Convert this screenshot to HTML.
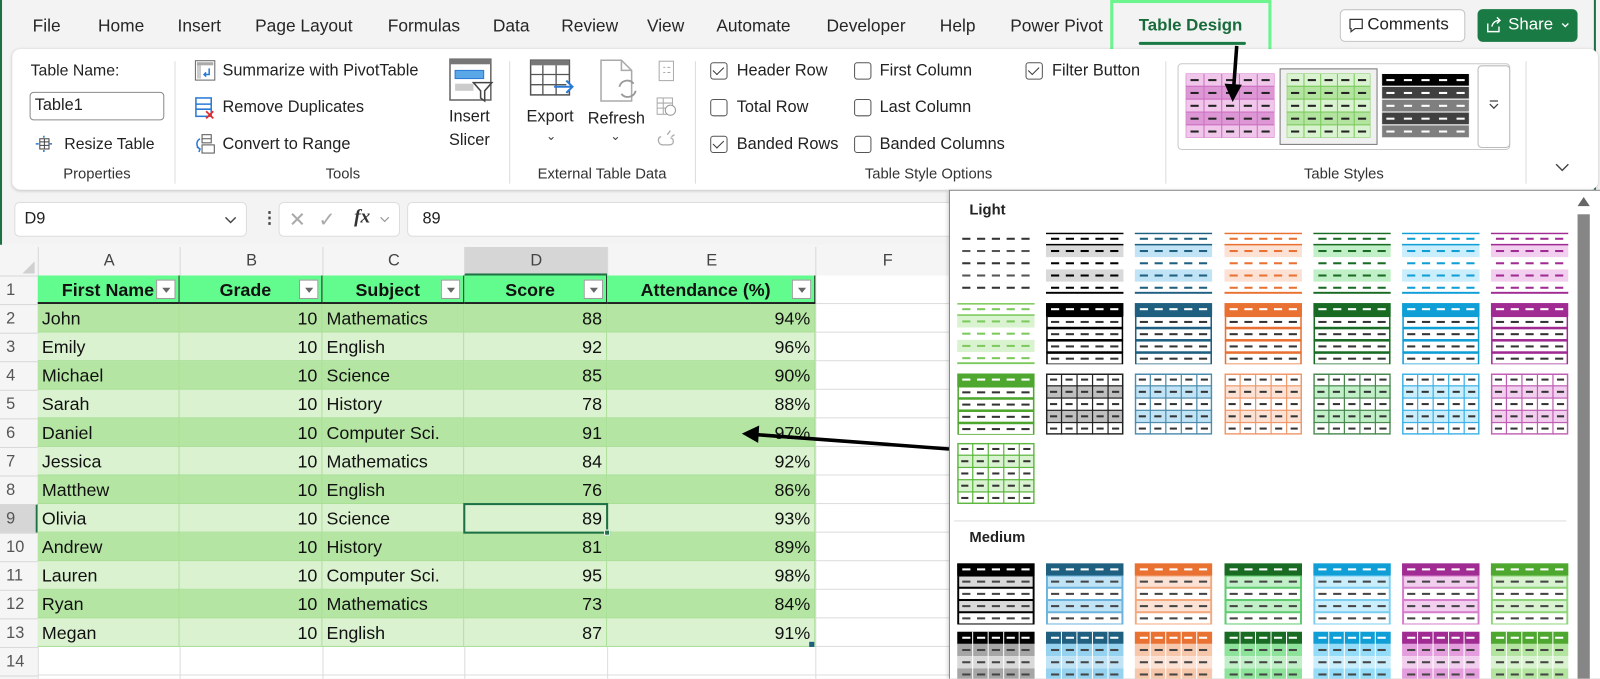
<!DOCTYPE html>
<html><head><meta charset="utf-8">
<style>
*{box-sizing:border-box;margin:0;padding:0}
html,body{width:1600px;height:679px;overflow:hidden;background:#f3f3f3;font-family:"Liberation Sans",Arial,sans-serif;color:#222}
#w{position:absolute;left:0;top:0;width:1568px;height:665px;transform:scale(1.020408);transform-origin:0 0;background:#f3f3f3;overflow:hidden}
.a{position:absolute;white-space:nowrap}
.tab{position:absolute;top:16px;font-size:17px;color:#262626}
.rt{font-size:16px;color:#222}
.gl{position:absolute;top:163px;font-size:14.5px;color:#333;transform:translateX(-50%)}
.sep{position:absolute;top:60px;width:1px;height:120px;background:#dcdcdc}
.cb{position:absolute;width:17px;height:17px;border:1.3px solid #555;border-radius:3px;background:#fff}
.cb.on::after{content:"";position:absolute;left:4px;top:1px;width:5px;height:9px;border:solid #333;border-width:0 1.5px 1.5px 0;transform:rotate(45deg)}
</style></head><body>
<div id="w">
<div class="a" style="left:0;top:0;width:2px;height:240px;background:#1e7145"></div>
<div class="tab" style="left:32px">File</div>
<div class="tab" style="left:96px">Home</div>
<div class="tab" style="left:174px">Insert</div>
<div class="tab" style="left:250px">Page Layout</div>
<div class="tab" style="left:380px">Formulas</div>
<div class="tab" style="left:483px">Data</div>
<div class="tab" style="left:550px">Review</div>
<div class="tab" style="left:634px">View</div>
<div class="tab" style="left:702px">Automate</div>
<div class="tab" style="left:810px">Developer</div>
<div class="tab" style="left:921px">Help</div>
<div class="tab" style="left:990px">Power Pivot</div>
<div class="tab" style="left:1116px;color:#1a6b3c;font-weight:bold;font-size:16.5px">Table Design</div>
<div class="a" style="left:1116px;top:41px;width:105px;height:3px;background:#1a7a43;border-radius:2px"></div>
<div class="a" style="left:1088px;top:0;width:158px;height:53px;border:3px solid #6cf58f"></div>
<div class="a" style="left:1313px;top:9px;width:123px;height:32px;border:1px solid #c4c4c4;border-radius:5px;background:#fff"></div>
<svg class="a" style="left:1321px;top:17px" width="16" height="16" viewBox="0 0 16 16"><path d="M2 2h12v9H7l-4 3v-3H2z" fill="none" stroke="#333" stroke-width="1.2"/></svg>
<div class="a rt" style="left:1340px;top:15px;font-size:16.5px">Comments</div>
<div class="a" style="left:1448px;top:9px;width:98px;height:32px;background:#1a7a43;border-radius:5px"></div>
<svg class="a" style="left:1456px;top:15px" width="17" height="18" viewBox="0 0 17 18"><path d="M2 8v8h11v-5M6 11c1-4 4-6 8-6M11 2l3 3-3 3" fill="none" stroke="#fff" stroke-width="1.4"/></svg>
<div class="a" style="left:1478px;top:15px;font-size:16.5px;color:#fff">Share</div>
<svg class="a" style="left:1530px;top:22px" width="8" height="6" viewBox="0 0 8 6"><path d="M1 1l3 3 3-3" fill="none" stroke="#fff" stroke-width="1.3"/></svg>
<div class="a" style="left:1562px;top:0;width:2px;height:190px;background:#1e7145"></div>

<div class="a" style="left:12px;top:48px;width:1554px;height:138px;background:#fff;border-radius:8px;box-shadow:0 1px 3px rgba(0,0,0,.18)"></div>
<div class="a rt" style="left:30px;top:61px;font-size:15.5px">Table Name:</div>
<div class="a" style="left:29px;top:90px;width:132px;height:28px;border:1px solid #8a8a8a;border-radius:4px;background:#fff"></div>
<div class="a rt" style="left:34px;top:95px">Table1</div>
<svg class="a" style="left:34px;top:132px" width="18" height="18" viewBox="0 0 18 18"><rect x="5" y="4" width="9" height="10" fill="none" stroke="#444"/><path d="M5 7h9M5 10.5h9M9.5 4v10" stroke="#444"/><path d="M9 1v2M9 15v2M1 9h3M14 9h3" stroke="#2a7ad5" stroke-width="1.5"/></svg>
<div class="a rt" style="left:63px;top:133px;font-size:15.5px">Resize Table</div>
<div class="gl" style="left:95px">Properties</div>
<div class="sep" style="left:171px"></div>

<svg class="a" style="left:190px;top:58px" width="22" height="22" viewBox="0 0 22 22"><rect x="1.5" y="1.5" width="19" height="19" fill="#fff" stroke="#666"/><rect x="3" y="3" width="4" height="16" fill="#ccc"/><rect x="3" y="3" width="16" height="3" fill="#aaa"/><path d="M15 9v6h-5M12 13l-2 2 2 2" fill="none" stroke="#2a7ad5" stroke-width="1.5"/></svg>
<div class="a rt" style="left:218px;top:61px">Summarize with PivotTable</div>
<svg class="a" style="left:190px;top:94px" width="22" height="24" viewBox="0 0 22 24"><rect x="2" y="2" width="15" height="18" fill="#fff" stroke="#2a7ad5" stroke-width="1.5"/><path d="M2 8h15M2 13h15" stroke="#2a7ad5" stroke-width="1.5"/><path d="M12 15l7 7M19 15l-7 7" stroke="#e03030" stroke-width="1.8"/></svg>
<div class="a rt" style="left:218px;top:97px">Remove Duplicates</div>
<svg class="a" style="left:190px;top:130px" width="22" height="22" viewBox="0 0 22 22"><rect x="8" y="2" width="9" height="8" fill="#fff" stroke="#555"/><path d="M8 6h9" stroke="#555"/><rect x="8" y="12" width="12" height="8" fill="#fff" stroke="#555"/><path d="M6 6c-4 2-4 8 0 10M3 14l3 2-1 3" fill="none" stroke="#2a7ad5" stroke-width="1.5"/></svg>
<div class="a rt" style="left:218px;top:133px">Convert to Range</div>
<svg class="a" style="left:440px;top:57px" width="44" height="46" viewBox="0 0 44 46"><rect x="1" y="1" width="40" height="40" fill="#fff" stroke="#666" stroke-width="1.5"/><rect x="1" y="1" width="40" height="5" fill="#777"/><rect x="6" y="12" width="28" height="8" fill="#5aa7e8" stroke="#2a7ad5"/><rect x="6" y="25" width="18" height="7" fill="#ccc"/><path d="M24 24h18l-7 8v10l-4-3v-7z" fill="#fff" stroke="#444" stroke-width="1.5"/></svg>
<div class="a rt" style="left:440px;top:106px">Insert</div>
<div class="a rt" style="left:440px;top:129px">Slicer</div>
<div class="gl" style="left:336px">Tools</div>
<div class="sep" style="left:499px"></div>

<svg class="a" style="left:519px;top:57px" width="46" height="44" viewBox="0 0 46 44"><rect x="1" y="2" width="38" height="34" fill="#fff" stroke="#555" stroke-width="1.5"/><rect x="1" y="2" width="38" height="5" fill="#777"/><path d="M1 16h38M1 26h38M13 7v29M26 7v29" stroke="#555" stroke-width="1.3"/><path d="M24 28h18M36 22l6 6-6 6" fill="#fff" stroke="#2a7ad5" stroke-width="2"/></svg>
<div class="a rt" style="left:516px;top:106px">Export</div>
<div class="a" style="left:535px;top:126px;font-size:12px;color:#444">⌄</div>
<svg class="a" style="left:587px;top:57px" width="40" height="46" viewBox="0 0 40 46"><path d="M2 2h20l10 10v30H2z" fill="#fff" stroke="#aaa" stroke-width="1.5"/><path d="M22 2v10h10" fill="none" stroke="#aaa" stroke-width="1.5"/><path d="M20 28a8 8 0 0 1 14-3M36 32a8 8 0 0 1-14 3" fill="none" stroke="#999" stroke-width="1.8"/></svg>
<div class="a rt" style="left:576px;top:108px">Refresh</div>
<div class="a" style="left:598px;top:126px;font-size:12px;color:#444">⌄</div>
<svg class="a" style="left:642px;top:58px" width="22" height="96" viewBox="0 0 22 96"><rect x="4" y="2" width="14" height="19" fill="#fff" stroke="#aaa"/><path d="M8 8h2M8 13h2M12 8h3M12 13h3" stroke="#aaa"/><rect x="2" y="38" width="15" height="16" fill="#fff" stroke="#aaa"/><path d="M2 43h15M2 48h15M8 38v16" stroke="#aaa"/><circle cx="15" cy="50" r="5" fill="#fff" stroke="#999"/><path d="M6 76c-4 0-4 8 2 8h6c5 0 5-6 1-7M12 74l3-4M16 76l3-2" fill="none" stroke="#aaa" stroke-width="1.3"/></svg>
<div class="gl" style="left:590px">External Table Data</div>
<div class="sep" style="left:681px"></div>

<div class="cb on" style="left:696px;top:61px"></div><div class="a rt" style="left:722px;top:61px">Header Row</div>
<div class="cb" style="left:696px;top:97px"></div><div class="a rt" style="left:722px;top:97px">Total Row</div>
<div class="cb on" style="left:696px;top:133px"></div><div class="a rt" style="left:722px;top:133px">Banded Rows</div>
<div class="cb" style="left:837px;top:61px"></div><div class="a rt" style="left:862px;top:61px">First Column</div>
<div class="cb" style="left:837px;top:97px"></div><div class="a rt" style="left:862px;top:97px">Last Column</div>
<div class="cb" style="left:837px;top:133px"></div><div class="a rt" style="left:862px;top:133px">Banded Columns</div>
<div class="cb on" style="left:1005px;top:61px"></div><div class="a rt" style="left:1031px;top:61px">Filter Button</div>
<div class="gl" style="left:910px">Table Style Options</div>
<div class="sep" style="left:1142px"></div>

<div class="a" style="left:1154px;top:62px;width:326px;height:85px;border:1px solid #c8c8c8;border-radius:4px;background:#fff"></div>
<div class="a" style="left:1254px;top:67px;width:96px;height:75px;border:1.5px solid #777;background:#f0f0f0"></div>
<div class="a" id="s1" style="left:1162px;top:72px"></div>
<div class="a" id="s2" style="left:1261px;top:72px"></div>
<div class="a" id="s3" style="left:1354px;top:72px"></div>
<div class="a" style="left:1448px;top:64px;width:32px;height:81px;border:1px solid #bbb;border-radius:4px;background:#fff"></div>
<svg class="a" style="left:1458px;top:97px" width="12" height="12" viewBox="0 0 12 12"><path d="M2 2h8M2 5l4 4 4-4" fill="none" stroke="#444" stroke-width="1.3"/></svg>
<div class="gl" style="left:1317px">Table Styles</div>
<div class="sep" style="left:1495px"></div>
<svg class="a" style="left:1524px;top:160px" width="14" height="9" viewBox="0 0 14 9"><path d="M1 1l6 6 6-6" fill="none" stroke="#444" stroke-width="1.4"/></svg>

<div class="a" style="left:14px;top:198px;width:228px;height:34px;background:#fff;border:1px solid #ddd;border-radius:5px"></div>
<div class="a rt" style="left:24px;top:206px">D9</div>
<svg class="a" style="left:220px;top:212px" width="12" height="8" viewBox="0 0 12 8"><path d="M1 1l5 5 5-5" fill="none" stroke="#444" stroke-width="1.4"/></svg>
<div class="a" style="left:256px;top:204px;font-size:16px;color:#444;font-weight:bold">⋮</div>
<div class="a" style="left:273px;top:198px;width:119px;height:34px;background:#fff;border:1px solid #ddd;border-radius:5px"></div>
<div class="a" style="left:283px;top:203px;font-size:20px;color:#aaa">✕</div>
<div class="a" style="left:312px;top:203px;font-size:20px;color:#aaa">✓</div>
<div class="a" style="left:347px;top:202px;font-size:19px;font-family:'Liberation Serif',serif;font-style:italic;font-weight:bold;color:#333">fx</div>
<svg class="a" style="left:372px;top:212px" width="10" height="7" viewBox="0 0 10 7"><path d="M1 1l4 4 4-4" fill="none" stroke="#999" stroke-width="1.2"/></svg>
<div class="a" style="left:399px;top:198px;width:600px;height:34px;background:#fff;border:1px solid #ddd;border-radius:5px"></div>
<div class="a rt" style="left:414px;top:206px">89</div>

<div class="a" id="grid" style="left:0;top:240px;width:1568px;height:425px;background:#fff"></div>

<div class="a" style="left:930px;top:186px;width:640px;height:480px;background:#fff;border:1px solid #8a8a8a;box-shadow:-1px 1px 4px rgba(0,0,0,.2)"></div>
<div class="a" style="left:950px;top:198px;font-size:14.5px;font-weight:bold;color:#222">Light</div>
<div class="a" style="left:935px;top:510px;width:600px;height:1px;background:#ddd"></div>
<div class="a" style="left:950px;top:519px;font-size:14.5px;font-weight:bold;color:#222">Medium</div>
<div class="a" id="gal" style="left:0;top:0"></div>
<div class="a" style="left:1546px;top:210px;width:12px;height:460px;background:#868686"></div>
<div class="a" style="left:1546px;top:193px;border-left:6px solid transparent;border-right:6px solid transparent;border-bottom:9px solid #666"></div>

<svg class="a" style="left:0;top:0" width="1568" height="665"><path d="M1212 45 L1209 86" stroke="#000" stroke-width="3.5"/><path d="M1200 82 L1208 100 L1217 83z" fill="#000"/><path d="M930 440 L742 426" stroke="#000" stroke-width="3.5"/><path d="M744 417 L727 425 L743 434z" fill="#000"/></svg>
</div>
<script>
function th(kind,a,b,c){
 var s='<svg width="76" height="60" viewBox="0 0 76 60">';
 function dashes(y,col,w){var r='';for(var j=0;j<5;j++){var x=5+j*14.5;r+='<rect x="'+x+'" y="'+(y-1)+'" width="'+(w||8)+'" height="2" fill="'+col+'"/>';}return r;}
 if(kind=='N'){for(var i=0;i<5;i++)s+=dashes(i*12+6,i%2?'#555':'#333');}
 else if(kind=='A'){s+='<rect x="0" y="12" width="76" height="12" fill="'+b+'"/><rect x="0" y="36" width="76" height="12" fill="'+b+'"/>';
  s+='<rect x="0" y="0" width="76" height="1.5" fill="'+a+'"/><rect x="0" y="11" width="76" height="1.5" fill="'+a+'"/><rect x="0" y="58" width="76" height="2" fill="'+a+'"/>';
  for(var i=0;i<5;i++)s+=dashes(i*12+6,a);}
 else if(kind=='B'){s+='<rect x="0" y="0" width="76" height="13" fill="'+a+'"/>';s+=dashes(6,'#fff');
  for(var i=1;i<5;i++){s+='<rect x="1" y="'+(i*12+1)+'" width="74" height="11" fill="#fff" stroke="'+a+'" stroke-width="1.5"/>';s+=dashes(i*12+6.5,'#333');}}
 else if(kind=='D'){for(var i=0;i<5;i++){if(i%2)s+='<rect x="0" y="'+(i*12)+'" width="76" height="12" fill="'+b+'"/>';}
  s+='<rect x="0.75" y="0.75" width="74.5" height="58.5" fill="none" stroke="'+a+'" stroke-width="1.5"/>';
  for(var i=1;i<5;i++)s+='<rect x="0" y="'+(i*12-0.5)+'" width="76" height="1.2" fill="'+a+'"/><rect x="'+(i*15.2-0.5)+'" y="0" width="1.2" height="60" fill="'+a+'"/>';
  for(var i=0;i<5;i++)for(var j=0;j<5;j++)s+='<rect x="'+(j*15.2+4)+'" y="'+(i*12+5)+'" width="7" height="2" fill="#333"/>';}
 else if(kind=='M1'){s+='<rect x="0" y="0" width="76" height="60" fill="'+c+'"/><rect x="0" y="0" width="76" height="12" fill="'+a+'"/>'+dashes(6,'#fff');
  for(var i=1;i<5;i++){s+='<rect x="2" y="'+(i*12+1)+'" width="72" height="10" fill="'+(i%2?b:'#fff')+'"/>';s+=dashes(i*12+6,'#444');}}
 else if(kind=='M2'){s+='<rect x="0" y="0" width="76" height="12" fill="'+a+'"/>';
  for(var i=1;i<5;i++)s+='<rect x="0" y="'+(i*12)+'" width="76" height="12" fill="'+(i%2?c:b)+'"/>';
  for(var j=1;j<5;j++)s+='<rect x="'+(j*15.2-0.5)+'" y="0" width="1" height="60" fill="#fff"/>';
  for(var i=0;i<5;i++)s+=dashes(i*12+6,i==0?'#fff':'#444');}
 return s+'</svg>';
}
var A={k:'#000',b:'#1f5f80',o:'#e97132',g:'#196b24',c:'#0f9ed5',p:'#a02b93',l:'#4ea72e'};
var B={k:'#d9d9d9',b:'#c0e4f5',o:'#fbe2d5',g:'#c1f0c8',c:'#caeefb',p:'#f2cfee',l:'#d9f2d0'};
var BD={k:'#bfbfbf',b:'#c0e4f5',o:'#fbe2d5',g:'#c1f0c8',c:'#caeefb',p:'#f2cfee',l:'#d9f2d0'};
var M={k:'#a6a6a6',b:'#94d2f0',o:'#f7c7ac',g:'#8ee39b',c:'#94dcf8',p:'#e59edd',l:'#b3e5a1'};
var MB={k:'#666',b:'#6cb4dd',o:'#f4a87e',g:'#5fcc70',c:'#7ccff2',p:'#d67fcc',l:'#8fd67a'};
var cols='kbogcpl'.split('');
var g='',xs=function(i){return 938+i*87.2};
function put(x,y,h){g+='<div style="position:absolute;left:'+x+'px;top:'+y+'px">'+h+'</div>';}
put(xs(0),228,th('N'));
for(var i=1;i<7;i++)put(xs(i),228,th('A',A[cols[i-1]],B[cols[i-1]]));
put(xs(0),297,th('A','#7cc95c',B.l));
for(var i=1;i<7;i++)put(xs(i),297,th('B',A[cols[i-1]]));
put(xs(0),366,th('B',A.l));
var GA={k:'#222',b:'#4d8cac',o:'#f09a6c',g:'#4a8a52',c:'#3fb3e6',p:'#c060b4',l:'#5cb83e'};
for(var i=1;i<7;i++)put(xs(i),366,th('D',GA[cols[i-1]],BD[cols[i-1]]));
put(xs(0),434,th('D',GA.l,B.l));
for(var i=0;i<7;i++){var k=cols[i];put(xs(i),552,th('M1',A[k],B[k],k=='k'?'#000':MB[k]));}
for(var i=0;i<7;i++){var k=cols[i];put(xs(i),619,th('M2',A[k],B[k],M[k]));}
document.getElementById('gal').innerHTML=g;
function mini(hdr,b1,b2,line,dash,hd,vert,w){var s='<svg width="'+w+'" height="63" viewBox="0 0 '+w+' 63">';
 for(var i=0;i<5;i++){s+='<rect x="0" y="'+(i*12.6)+'" width="'+w+'" height="12.6" fill="'+(i==0?hdr:(i%2?b1:b2))+'" stroke="'+line+'" stroke-width="1"/>';}
 if(vert)for(var j=1;j<5;j++)s+='<rect x="'+(j*w/5)+'" y="0" width="1" height="63" fill="'+line+'"/>';
 for(var i=0;i<5;i++)for(var j=0;j<5;j++)s+='<rect x="'+(j*w/5+w/10-4)+'" y="'+(i*12.6+5.5)+'" width="8" height="2" fill="'+(i==0?hd:dash)+'"/>';
 return s+'</svg>';}
document.getElementById('s1').innerHTML=mini('#f0c6ea','#dc97d4','#f0c6ea','#cf6fc3','#222','#222',1,87);
document.getElementById('s2').innerHTML=mini('#d9f2d0','#b3e5a1','#d9f2d0','#7cc95c','#222','#222',1,82);
document.getElementById('s3').innerHTML=mini('#000','#404040','#7f7f7f','#fff','#fff','#fff',0,86);
var gr='';var cx=[37,176,316,455,595,799,940,1100,1260,1420,1580];
function d(x,y,w,h,st,t){gr+='<div style="position:absolute;left:'+x+'px;top:'+y+'px;width:'+w+'px;height:'+h+'px;'+st+'">'+(t||'')+'</div>';}
d(0,0,1568,30,'background:#f5f5f5');
d(0,30,37,400,'background:#f5f5f5');
gr+='<div style="position:absolute;left:22px;top:16px;border-left:12px solid transparent;border-bottom:12px solid #d0d0d0"></div>';
var L='ABCDEFGHIJ';
for(var i=0;i<6;i++){var sel=i==3;d(cx[i],2,cx[i+1]-cx[i],28,'border-left:1px solid #d8d8d8;text-align:center;line-height:28px;font-size:16px;color:#444;'+(sel?'background:#d6d6d6;border-bottom:2px solid #1e7145;':''),L[i]);}
var data=[['John',10,'Mathematics',88,'94%'],['Emily',10,'English',92,'96%'],['Michael',10,'Science',85,'90%'],['Sarah',10,'History',78,'88%'],['Daniel',10,'Computer Sci.',91,'97%'],['Jessica',10,'Mathematics',84,'92%'],['Matthew',10,'English',76,'86%'],['Olivia',10,'Science',89,'93%'],['Andrew',10,'History',81,'89%'],['Lauren',10,'Computer Sci.',95,'98%'],['Ryan',10,'Mathematics',73,'84%'],['Megan',10,'English',87,'91%']];
for(var r=1;r<=15;r++){var y=30+(r-1)*28;
 d(0,y,37,28,'border-top:1px solid #d8d8d8;line-height:28px;font-size:16px;color:#555;padding-left:6px;'+(r==9?'background:#d6d6d6;border-right:2px solid #1e7145;':''),String(r));
 d(37,y+27,1531,1,'background:#dcdcdc');
}
for(var i=0;i<7;i++)d(cx[i],30,1,420,'background:#dcdcdc');
var H=['First Name','Grade','Subject','Score','Attendance (%)'];
for(var i=0;i<5;i++){var w=cx[i+1]-cx[i];
 d(cx[i],30,w,28,'background:#62fb8d;border-right:1px solid #1f1f1f;border-bottom:2px solid #222;font-weight:bold;font-size:17.5px;line-height:28px;text-align:'+(i==0?'right;padding-right:24px':'center;padding-right:10px')+';color:#111',H[i]);
 d(cx[i+1]-23,34,19,19,'background:#fff;border:1px solid #9a9a9a','<div style="position:absolute;left:5px;top:7px;border-left:4px solid transparent;border-right:4px solid transparent;border-top:5px solid #666"></div>');}
for(var r=0;r<12;r++){var y=58+r*28,bg=r%2?'#daf2d0':'#b4e5a2';
 for(var i=0;i<5;i++){var w=cx[i+1]-cx[i],v=data[r][i],right=(typeof v=='number'||i==4);
  d(cx[i],y,w,28,'background:'+bg+';border-right:1px solid #a9df96;border-bottom:1px solid #a9df96;font-size:17.5px;line-height:28px;color:#111;padding:0 4px;text-align:'+(right?'right':'left'),String(v));}}
d(454,58+7*28-1,142,30,'border:2px solid #1e7145');
d(592,58+8*28-3,6,6,'background:#1e7145;border:1px solid #fff');
d(793,58+12*28-5,5,5,'background:#1f5f80');
document.getElementById('grid').innerHTML=gr;
</script>
</body></html>
